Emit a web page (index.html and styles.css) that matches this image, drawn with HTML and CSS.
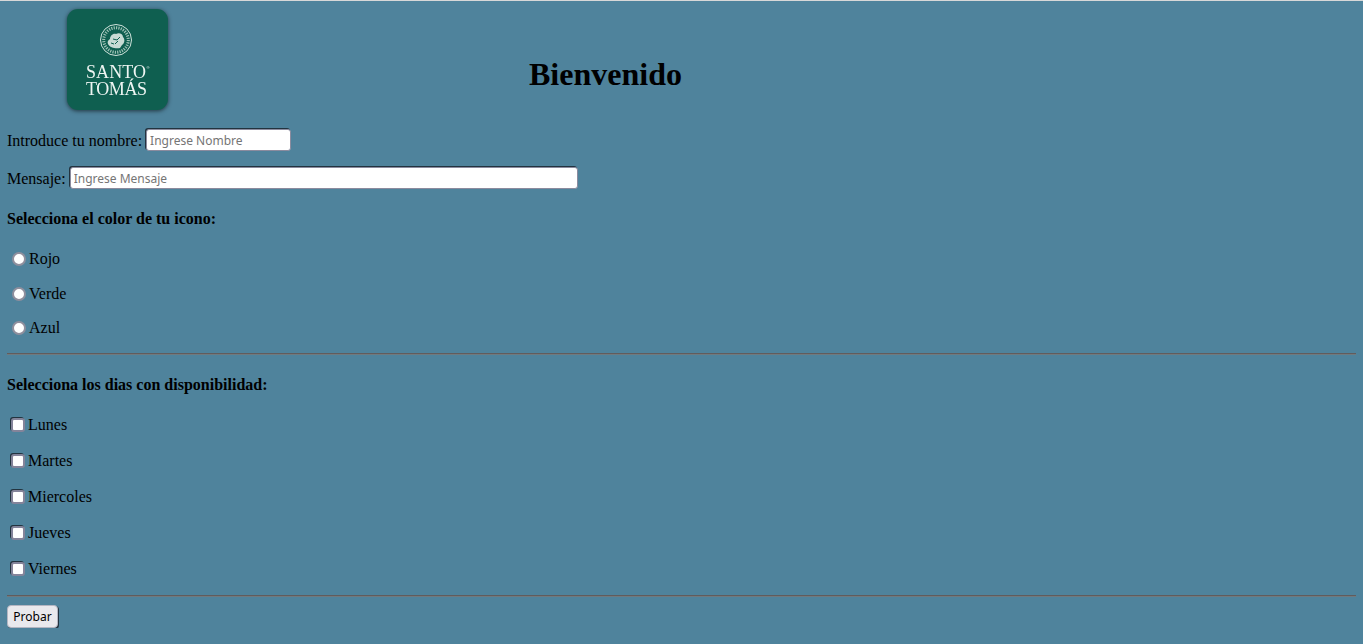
FILE: index.html
```html
<!DOCTYPE html>
<html lang="es">
<head>
<meta charset="utf-8">
<title>Bienvenido</title>
<link rel="stylesheet" href="styles.css">
</head>
<body>
<header class="header">
  <svg class="logo" viewBox="0 0 101 101" width="101" height="101" role="img" aria-label="Santo Tomás">
    <rect width="101" height="101" rx="11" fill="#0f5f50"/>
    <circle cx="49" cy="31" r="15.5" fill="none" stroke="#cfe2db" stroke-width="1"/>
    <circle cx="49" cy="31" r="12.3" fill="none" stroke="#9fc2b6" stroke-width="3" stroke-dasharray="1.2 1.2"/>
    <path d="M41 35c-1-2 0-4 2-5 0-3 3-6 6-5 3-2 7 0 7 3 2 2 2 6-1 8l-2 3c-4 1-10 0-12-4z" fill="#c7dbd4"/>
    <path d="M46 30l4 1 3-3M48 35l3-3M44 34l3 1" fill="none" stroke="#0f5f50" stroke-width="1"/>
    <text class="logo-text" x="19" y="69" textLength="60" lengthAdjust="spacing">SANTO</text>
    <text class="logo-mark" x="79.5" y="60">®</text>
    <text class="logo-text" x="19" y="86" textLength="61" lengthAdjust="spacing">TOMÁS</text>
  </svg>
  <h1 class="title">Bienvenido</h1>
</header>
<main>
  <form>
    <div class="row-name">
      <label class="field-label" for="nombre">Introduce tu nombre:</label>
      <input class="field field-short" id="nombre" type="text" placeholder="Ingrese Nombre">
    </div>
    <div class="row-message">
      <label class="field-label" for="mensaje">Mensaje:</label>
      <input class="field field-long" id="mensaje" type="text" placeholder="Ingrese Mensaje">
    </div>
    <p class="section-title section-first">Selecciona el color de tu icono:</p>
    <div class="radio-list">
      <label class="option"><input class="radio" type="radio" name="color">Rojo</label>
      <label class="option"><input class="radio" type="radio" name="color">Verde</label>
      <label class="option"><input class="radio" type="radio" name="color">Azul</label>
    </div>
    <hr class="rule">
    <p class="section-title">Selecciona los dias con disponibilidad:</p>
    <div class="check-list">
      <label class="option"><input class="check" type="checkbox">Lunes</label>
      <label class="option"><input class="check" type="checkbox">Martes</label>
      <label class="option"><input class="check" type="checkbox">Miercoles</label>
      <label class="option"><input class="check" type="checkbox">Jueves</label>
      <label class="option"><input class="check" type="checkbox">Viernes</label>
    </div>
    <hr class="rule">
    <button class="submit" type="button">Probar</button>
  </form>
</main>
</body>
</html>
```
FILE: styles.css
```css
html {
  background: #4f839c;
  border-top: 1px solid #d8d8d8;
}
body {
  margin: 0 7px;
  font-family: "Liberation Serif", "Times New Roman", serif;
  font-size: 16px;
  color: #000;
}
.header {
  display: flex;
  align-items: flex-start;
  height: 127px;
  padding-left: 60px;
}
.logo {
  margin-top: 8px;
  flex: none;
  filter: drop-shadow(0 1px 2px rgba(0, 0, 0, 0.6));
}
.logo-text {
  font-family: "Liberation Serif", serif;
  font-size: 18px;
  fill: #eef5f2;
}
.logo-mark {
  font-family: "Liberation Sans", sans-serif;
  font-size: 4px;
  fill: #eef5f2;
}
.title {
  margin: 55px 0 0 361px;
  font-size: 32px;
  font-weight: bold;
  line-height: 37px;
}
.row-name,
.row-message {
  display: flex;
  align-items: center;
  gap: 4px;
  height: 23px;
}
.row-message {
  margin-top: 15px;
}
.field-label {
  padding-top: 2px;
}
.field {
  align-self: flex-end;
  box-sizing: border-box;
  height: 22px;
  padding: 2px 3px 1px;
  border: 1px solid #8b8b9e;
  border-radius: 3px;
  box-shadow: -1px -1px 0 #22333f;
  background: #fff;
  font-family: "Noto Sans", sans-serif;
  font-size: 12px;
}
.field::placeholder {
  color: #757575;
}
.field-short {
  width: 145px;
}
.field-long {
  width: 508px;
}
.section-title {
  margin: 21px 0 0;
  font-weight: bold;
  font-size: 16px;
  line-height: 18px;
}
.option {
  display: flex;
  align-items: center;
}
.radio-list {
  display: flex;
  flex-direction: column;
  gap: 16.5px;
  margin-top: 22px;
}
.radio-list .option {
  height: 18px;
}
.radio {
  appearance: none;
  box-sizing: border-box;
  width: 14px;
  height: 14px;
  margin: 0 3px 0 5px;
  border: 2px solid #8f8f9d;
  border-radius: 50%;
  background: #fff;
}
.check-list {
  display: flex;
  flex-direction: column;
  gap: 16px;
  margin-top: 21px;
}
.check-list .option {
  height: 20px;
}
.check {
  appearance: none;
  box-sizing: border-box;
  width: 14px;
  height: 14px;
  margin: 0 3px 0 4px;
  border: 2px solid #84849a;
  border-radius: 3px;
  box-shadow: -1px -1px 0 #22333f;
  background: #fff;
}
.rule {
  box-sizing: border-box;
  height: 2px;
  margin: 16px 0 0;
  border: 0;
  background: linear-gradient(#625c5c 50%, #6f7a80 50%);
}
.submit {
  display: block;
  box-sizing: border-box;
  width: 51px;
  height: 23px;
  margin-top: 8px;
  padding: 0;
  border: 1px solid #b4b6c2;
  border-radius: 4px;
  box-shadow: 1px 1px 0 #22333f;
  background: #e9e9ed;
  font-family: "Noto Sans", sans-serif;
  font-size: 12px;
  color: #000;
}
```
